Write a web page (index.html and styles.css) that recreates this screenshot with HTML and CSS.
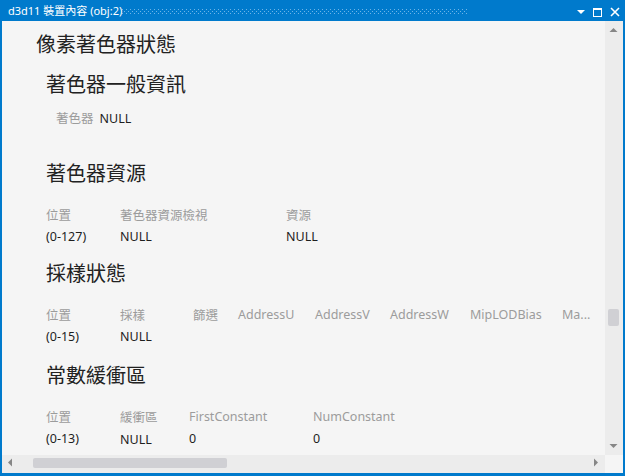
FILE: index.html
```html
<!DOCTYPE html>
<html lang="zh-Hant">
<head>
<meta charset="utf-8">
<title>d3d11 裝置內容 (obj:2)</title>
<link rel="stylesheet" href="styles.css">
</head>
<body>
<div class="window">
  <div class="titlebar">
    <span class="title">d3d11 裝置內容 (obj:2)</span>
    <div class="grip"></div>
    <svg class="tb-icons" width="50" height="21" viewBox="0 0 50 21">
      <polygon points="4,10 12,10 8,14" fill="#fff"/>
      <rect x="20.5" y="8.5" width="8" height="8" fill="none" stroke="#fff" stroke-width="1"/>
      <rect x="20" y="8" width="9" height="2" fill="#fff"/>
      <path d="M38 8 L46 16 M46 8 L38 16" stroke="#fff" stroke-width="1.6" fill="none"/>
    </svg>
  </div>
  <div class="main">
    <div class="viewport">
      <div class="content">
        <h1 class="h1">像素著色器狀態</h1>

        <section class="sec sec-info">
          <h2 class="h2 h2-info">著色器一般資訊</h2>
          <div class="info-row"><span class="th">著色器</span><span class="td">NULL</span></div>
        </section>

        <section class="sec sec-res">
          <h2 class="h2">著色器資源</h2>
          <div class="grid grid-res">
            <span class="th">位置</span><span class="th">著色器資源檢視</span><span class="th">資源</span>
            <span class="td">(0-127)</span><span class="td">NULL</span><span class="td">NULL</span>
          </div>
        </section>

        <section class="sec sec-samp">
          <h2 class="h2">採樣狀態</h2>
          <div class="grid grid-samp">
            <span class="th">位置</span><span class="th">採樣</span><span class="th">篩選</span><span class="th">AddressU</span><span class="th">AddressV</span><span class="th">AddressW</span><span class="th">MipLODBias</span><span class="th">Ma...</span>
            <span class="td">(0-15)</span><span class="td">NULL</span><span class="td"></span><span class="td"></span><span class="td"></span><span class="td"></span><span class="td"></span><span class="td"></span>
          </div>
        </section>

        <section class="sec sec-cb">
          <h2 class="h2">常數緩衝區</h2>
          <div class="grid grid-cb">
            <span class="th">位置</span><span class="th">緩衝區</span><span class="th">FirstConstant</span><span class="th">NumConstant</span>
            <span class="td">(0-13)</span><span class="td td-low">NULL</span><span class="td">0</span><span class="td">0</span>
          </div>
        </section>
      </div>
    </div>
    <div class="vscroll">
      <div class="arrow-box">
        <svg width="18" height="17" viewBox="0 0 18 17"><polygon points="4.5,11 12.5,11 8.5,7" fill="#868686"/></svg>
      </div>
      <div class="vtrack"><div class="vthumb"></div></div>
      <div class="arrow-box">
        <svg width="18" height="17" viewBox="0 0 18 17"><polygon points="4.5,6 12.5,6 8.5,10" fill="#868686"/></svg>
      </div>
    </div>
  </div>
  <div class="hbar">
    <div class="hscroll">
      <div class="harrow">
        <svg width="17" height="18" viewBox="0 0 17 18"><polygon points="10,3.5 10,11.5 6,7.5" fill="#868686"/></svg>
      </div>
      <div class="htrack"><div class="hthumb"></div></div>
      <div class="harrow">
        <svg width="17" height="18" viewBox="0 0 17 18"><polygon points="6,3.5 6,11.5 10,7.5" fill="#868686"/></svg>
      </div>
    </div>
    <div class="corner"></div>
  </div>
</div>
</body>
</html>
```

FILE: styles.css
```css
html, body {
  margin: 0;
  padding: 0;
}

body {
  font-family: "Noto Sans", "Noto Sans CJK TC", sans-serif;
  background: #007acc;
}

.window {
  width: 625px;
  height: 476px;
  box-sizing: border-box;
  background: #007acc;
  padding: 0 2px 3px 2px;
  display: flex;
  flex-direction: column;
  overflow: hidden;
}

/* Title bar */
.titlebar {
  height: 21px;
  flex: 0 0 21px;
  display: flex;
  align-items: center;
  color: #fff;
}

.title {
  flex: 0 0 auto;
  padding-left: 6px;
  font-size: 11px;
  line-height: 21px;
  white-space: nowrap;
}

.grip {
  flex: 0 1 350px;
  min-width: 0;
  height: 5px;
  margin: 2px 105px 0 auto;
  background-image:
    radial-gradient(circle at 0.5px 0.5px, #6db4e8 0.75px, transparent 0.9px),
    radial-gradient(circle at 2.5px 2.5px, #6db4e8 0.75px, transparent 0.9px);
  background-size: 4px 4px, 4px 4px;
}

.tb-icons {
  flex: 0 0 50px;
  display: block;
}

/* Main area */
.main {
  flex: 1 1 auto;
  display: flex;
  min-height: 0;
}

.viewport {
  flex: 1 1 auto;
  background: #f5f5f5;
  overflow: hidden;
  min-width: 0;
}

.content {
  padding: 10px 0 0 34px;
  color: #1e1e1e;
  white-space: nowrap;
}

.h1, .h2 {
  margin: 0;
  font-size: 20px;
  font-weight: 400;
  line-height: 28px;
  color: #222;
}

.sec {
  margin-left: 10px;
}

.sec-info { margin-top: 12px; }
.sec-res { margin-top: 31px; }
.sec-samp { margin-top: 13px; }
.sec-cb { margin-top: 15px; }

.h2 {
  margin-bottom: 15px;
}

.h2-info {
  margin-bottom: 10px;
}

.info-row {
  display: flex;
  gap: 6px;
  padding-left: 10px;
  font-size: 12.5px;
  line-height: 20px;
}

.th {
  color: #9c9c9c;
  font-size: 12.5px;
}

.td {
  color: #1e1e1e;
  font-size: 12.5px;
}

.td-low {
  position: relative;
  top: 1px;
}

.grid {
  display: grid;
  grid-auto-rows: 22px;
  align-items: center;
}

.grid-res {
  grid-template-columns: 74px 166px 100px;
}

.grid-samp {
  grid-template-columns: 74px 73px 45px 77px 75px 80px 92px 40px;
}

.grid-cb {
  grid-template-columns: 74px 69px 124px 100px;
}

/* Vertical scrollbar */
.vscroll {
  flex: 0 0 18px;
  width: 18px;
  background: #ececec;
  display: flex;
  flex-direction: column;
}

.arrow-box {
  height: 17px;
  flex: 0 0 17px;
}

.arrow-box svg {
  display: block;
}

.vtrack {
  flex: 1 1 auto;
}

.vthumb {
  margin: 271px 0 0 3px;
  width: 11px;
  height: 17px;
  background: #d0d0d4;
  border-radius: 2px;
}

/* Horizontal scrollbar */
.hbar {
  flex: 0 0 18px;
  height: 18px;
  display: flex;
}

.hscroll {
  flex: 1 1 auto;
  background: #ececec;
  display: flex;
}

.harrow {
  flex: 0 0 17px;
  width: 17px;
}

.harrow svg {
  display: block;
}

.htrack {
  flex: 1 1 auto;
  padding-top: 3px;
}

.hthumb {
  margin-left: 14px;
  width: 194px;
  height: 10px;
  background: #d0d0d4;
  border-radius: 2px;
}

.corner {
  flex: 0 0 18px;
  width: 18px;
  background: #f5f5f5;
}
```
